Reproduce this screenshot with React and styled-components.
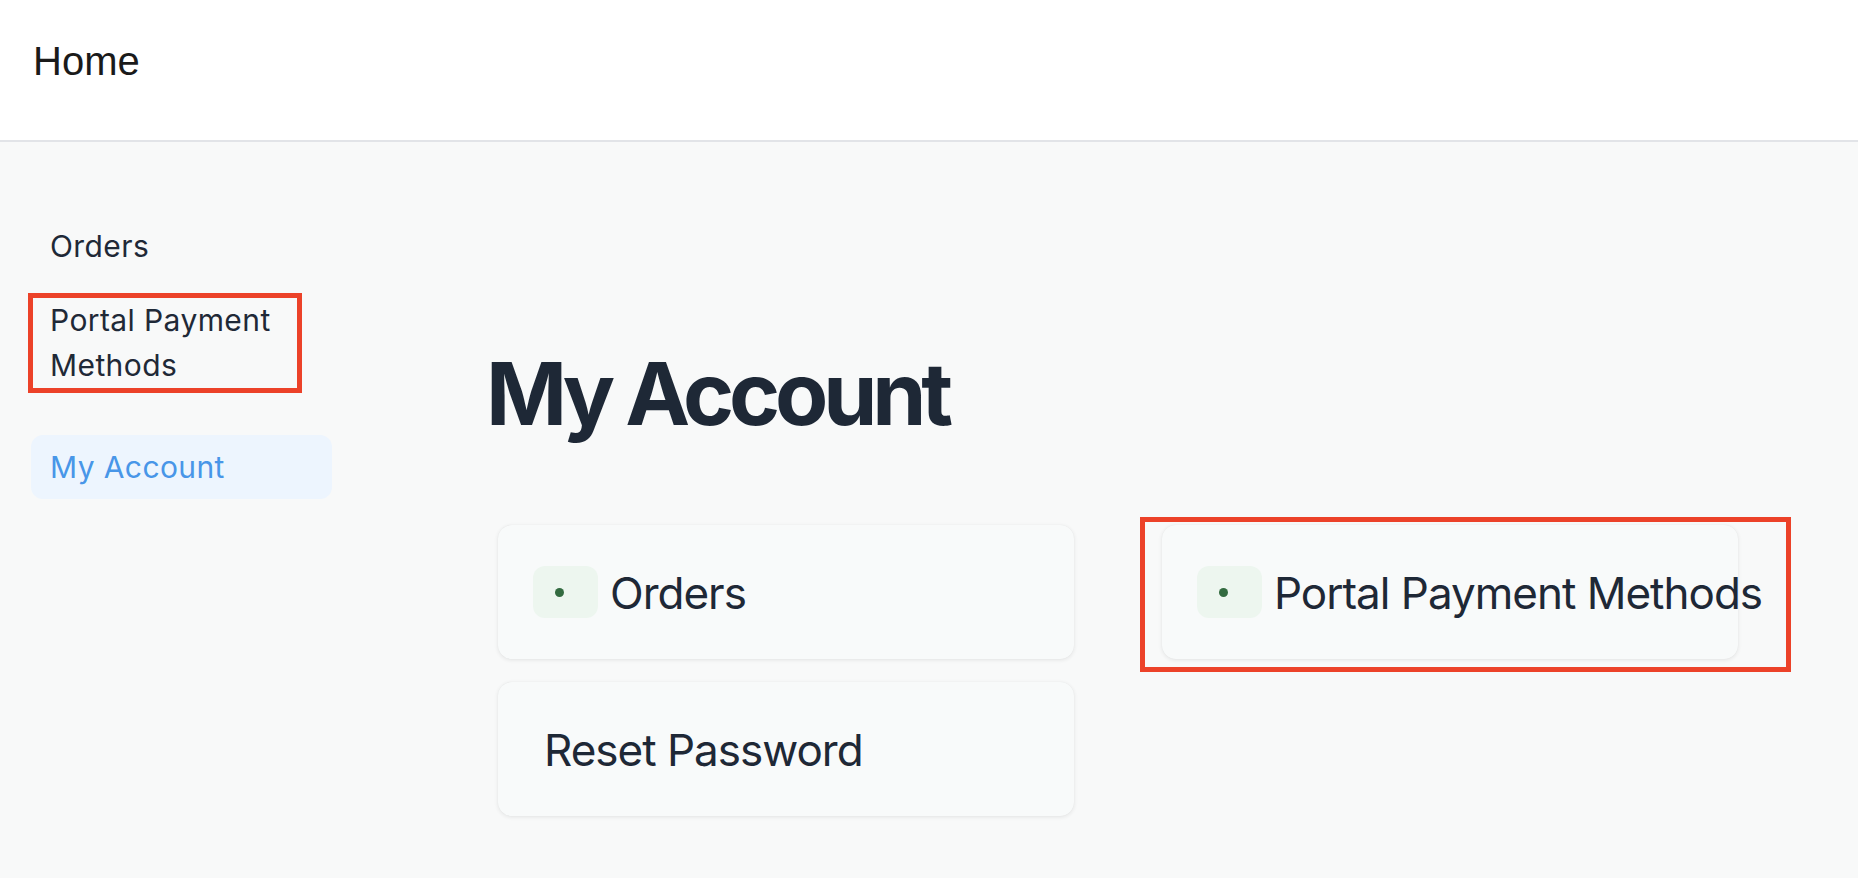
import React from 'react';
import styled, { createGlobalStyle } from 'styled-components';

const GlobalStyle = createGlobalStyle`
  html, body {
    margin: 0;
    padding: 0;
    background: #f8f9f9;
  }
  body {
    font-family: Inter, "Noto Sans", sans-serif;
    color: #1f2937;
  }
`;

const Page = styled.div`
  min-height: 100vh;
  display: flex;
  flex-direction: column;
`;

const Header = styled.header`
  height: 140px;
  background: #ffffff;
  border-bottom: 2px solid #e2e4e8;
  display: flex;
  align-items: center;
  padding-left: 33px;
`;

const HomeLink = styled.a`
  font-family: "Liberation Sans", Arial, sans-serif;
  font-size: 40px;
  color: #1a1a1a;
  text-decoration: none;
  margin-top: -17px;
`;

const Body = styled.div`
  flex: 1;
  display: flex;
`;

const Sidebar = styled.nav`
  width: 301px;
  flex-shrink: 0;
  padding: 72px 31px 0 31px;
  display: flex;
  flex-direction: column;
`;

const NavItem = styled.a`
  position: relative;
  display: block;
  padding: 10px 19px 9px;
  margin-bottom: ${(p) => p.$gap || 10}px;
  border-radius: 12px;
  font-size: 30px;
  font-weight: 400;
  line-height: 45px;
  letter-spacing: 0.4px;
  color: ${(p) => (p.$active ? '#4896e8' : '#1f2937')};
  background: ${(p) => (p.$active ? '#edf5fe' : 'transparent')};
  text-decoration: none;
`;

const Highlight = styled.span`
  position: absolute;
  border: 5px solid #ec4229;
  pointer-events: none;
  left: ${(p) => p.$left}px;
  top: ${(p) => p.$top}px;
  right: ${(p) => p.$right}px;
  bottom: ${(p) => p.$bottom}px;
`;

const Main = styled.main`
  flex: 1;
  padding: 200px 0 0 123px;
`;

const Title = styled.h1`
  margin: 0 0 79px;
  font-size: 87px;
  line-height: 1.2;
  font-weight: 650;
  letter-spacing: -5.2px;
  color: #1e2836;
`;

const CardGrid = styled.div`
  display: grid;
  grid-template-columns: 576px 576px;
  column-gap: 88px;
  row-gap: 23px;
  margin-left: 12px;
`;

const Card = styled.a`
  position: relative;
  height: 134px;
  box-sizing: border-box;
  display: flex;
  align-items: center;
  gap: 12px;
  padding-left: ${(p) => (p.$plain ? 46 : 35)}px;
  background: #f8fafa;
  border-radius: 14px;
  box-shadow: 0 1px 4px rgba(0, 0, 0, 0.09), 0 0 1px rgba(0, 0, 0, 0.06);
  color: #1e2836;
  text-decoration: none;
`;

const IconBox = styled.span`
  width: 65px;
  height: 52px;
  flex-shrink: 0;
  border-radius: 12px;
  background: #edf6ef;
  display: flex;
  align-items: center;
  padding-left: 22px;
  box-sizing: border-box;
`;

const Dot = styled.span`
  width: 9px;
  height: 9px;
  border-radius: 50%;
  background: #336b40;
`;

const CardLabel = styled.span`
  font-size: 44px;
  white-space: nowrap;
  letter-spacing: -1px;
  margin-top: 2px;
`;

export default function App() {
  return (
    <Page>
      <GlobalStyle />
      <Header>
        <HomeLink href="#">Home</HomeLink>
      </Header>
      <Body>
        <Sidebar>
          <NavItem href="#">Orders</NavItem>
          <NavItem href="#" $gap={38}>
            Portal Payment Methods
            <Highlight $left={-3} $top={5} $right={30} $bottom={4} />
          </NavItem>
          <NavItem href="#" $active>My Account</NavItem>
        </Sidebar>
        <Main>
          <Title>My Account</Title>
          <CardGrid>
            <Card href="#">
              <IconBox><Dot /></IconBox>
              <CardLabel>Orders</CardLabel>
            </Card>
            <Card href="#">
              <IconBox><Dot /></IconBox>
              <CardLabel>Portal Payment Methods</CardLabel>
              <Highlight $left={-22} $top={-8} $right={-53} $bottom={-13} />
            </Card>
            <Card href="#" $plain>
              <CardLabel>Reset Password</CardLabel>
            </Card>
          </CardGrid>
        </Main>
      </Body>
    </Page>
  );
}
